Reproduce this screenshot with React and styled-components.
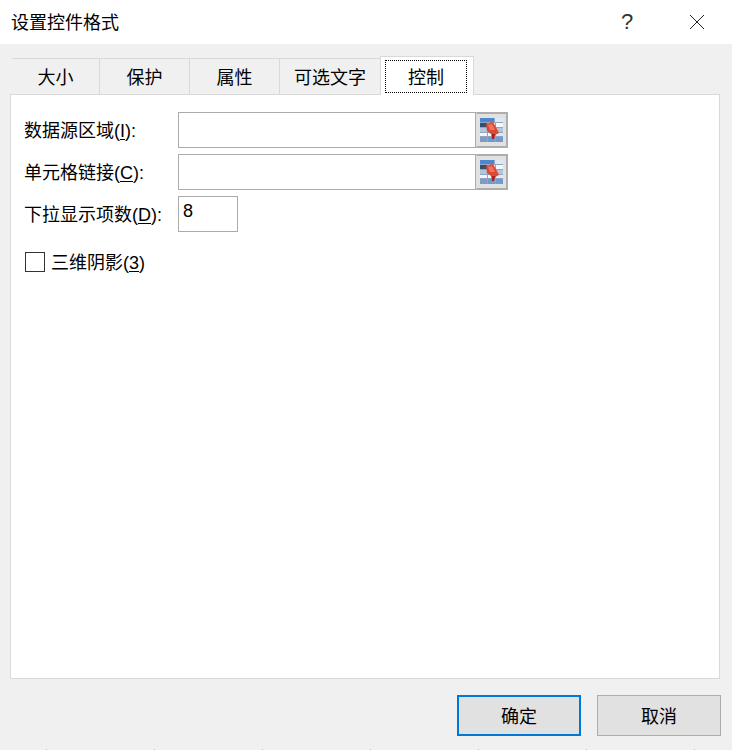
import React from "react";
import styled, { createGlobalStyle } from "styled-components";

const GlobalStyle = createGlobalStyle`
  html, body {
    margin: 0;
    padding: 0;
    background: #f0f0f0;
  }
  * {
    box-sizing: border-box;
  }
`;

const Dialog = styled.div`
  width: 732px;
  height: 750px;
  overflow: hidden;
  display: flex;
  flex-direction: column;
  background: #f0f0f0;
  color: #000;
  font-family: "Noto Sans CJK SC", "Liberation Sans", sans-serif;
  font-size: 18px;
`;

const TitleBar = styled.div`
  height: 44px;
  flex: none;
  display: flex;
  align-items: center;
  background: #fff;
  padding-left: 11px;
`;

const Title = styled.div`
  flex: 1;
  margin-top: -2px;
`;

const TitleButton = styled.div`
  width: 46px;
  height: 44px;
  display: flex;
  align-items: center;
  justify-content: center;
  font-family: "Liberation Sans", sans-serif;
  font-size: 22px;
  color: #333;
  margin-right: ${(p) => p.$end || 0}px;
`;

const Tabs = styled.div`
  height: 50px;
  flex: none;
  display: flex;
  align-items: flex-end;
  padding-left: 12px;
`;

const Tab = styled.div`
  width: ${(p) => p.$w}px;
  height: 36px;
  padding-bottom: 1px;
  display: flex;
  align-items: center;
  justify-content: center;
  border-top: 1px solid #d9d9d9;
  border-right: 1px solid #d9d9d9;
`;

const ActiveTab = styled.div`
  width: 94px;
  height: 39px;
  margin-left: -1px;
  margin-bottom: -1px;
  padding: 3px 6px 2px 4px;
  background: #fff;
  border: 1px solid #d9d9d9;
  border-bottom: none;
  position: relative;
  z-index: 1;
`;

const FocusBox = styled.div`
  height: 100%;
  padding-bottom: 1px;
  display: flex;
  align-items: center;
  justify-content: center;
  outline: 1px dotted #000;
  outline-offset: -1px;
`;

const Panel = styled.div`
  width: 710px;
  height: 585px;
  margin-left: 10px;
  flex: none;
  background: #fff;
  border: 1px solid #d9d9d9;
  padding: 17px 0 0 13px;
`;

const FieldRow = styled.div`
  display: flex;
  align-items: center;
  height: 36px;
  margin-bottom: 6px;
`;

const Label = styled.label`
  width: 154px;
  flex: none;
  padding-bottom: 3px;
  white-space: nowrap;
`;

const Key = styled.span`
  font-family: "Liberation Sans", sans-serif;
`;

const Hot = styled.span`
  text-decoration: underline;
  text-underline-offset: 2px;
`;

const RangeBox = styled.div`
  width: 298px;
  height: 36px;
  flex: none;
  background: #fff;
  border: 1px solid #ababab;
`;

const RangeButton = styled.div`
  width: 32px;
  height: 36px;
  flex: none;
  display: flex;
  align-items: center;
  justify-content: center;
  background: #e1e1e1;
  border: 2px solid #adadad;
  border-left: 1px solid #e1e1e1;
`;

const NumberBox = styled.div`
  width: 60px;
  height: 36px;
  flex: none;
  padding: 0 0 6px 4px;
  border: 1px solid #ababab;
  font-family: "Liberation Sans", sans-serif;
  display: flex;
  align-items: center;
`;

const CheckRow = styled.div`
  display: flex;
  align-items: center;
  height: 22px;
  margin-top: 19px;
  padding-left: 1px;
`;

const CheckBox = styled.div`
  width: 20px;
  height: 20px;
  flex: none;
  border: 1px solid #333;
  background: #fff;
  margin-right: 6px;
`;

const CheckText = styled.span`
  padding-bottom: 2px;
`;

const Footer = styled.div`
  flex: 1;
  display: flex;
  justify-content: flex-end;
  padding: 16px 11px 0 0;
  gap: 16px;
`;

const DialogButton = styled.div`
  width: 124px;
  height: 41px;
  padding-bottom: 2px;
  display: flex;
  align-items: center;
  justify-content: center;
  background: #e1e1e1;
  border: ${(p) => (p.$primary ? "2px solid #0078d7" : "1px solid #adadad")};
`;

// faint marks along the very bottom edge of the capture
const EdgeTicks = styled.div`
  height: 1px;
  flex: none;
  margin-left: 46px;
  background: repeating-linear-gradient(90deg, #bdbdbd 0 1px, transparent 1px 108px);
`;

const RangeIcon = () => (
  <svg width="23" height="24" viewBox="0 0 23 24" shapeRendering="crispEdges">
    <rect width="23" height="24" fill="#8fa6c2" />
    <rect x="0" y="0" width="14" height="4" fill="#4f86d0" />
    <rect x="15" y="0" width="8" height="4" fill="#dfe8f3" />
    <rect x="0" y="5" width="7" height="4" fill="#35506e" />
    <rect x="8" y="5" width="7" height="4" fill="#eef3f9" />
    <rect x="16" y="5" width="7" height="4" fill="#f4f7fb" />
    <rect x="0" y="10" width="7" height="4" fill="#b4c6dc" />
    <rect x="8" y="10" width="7" height="4" fill="#eef3f9" />
    <rect x="16" y="10" width="7" height="4" fill="#b4c6dc" />
    <rect x="0" y="15" width="7" height="3" fill="#f4f7fb" />
    <rect x="8" y="15" width="7" height="3" fill="#f4f7fb" />
    <rect x="16" y="15" width="7" height="3" fill="#dfe8f3" />
    <rect x="0" y="19" width="7" height="5" fill="#7f9cc0" />
    <rect x="8" y="19" width="7" height="5" fill="#6f9bd0" />
    <rect x="16" y="19" width="7" height="5" fill="#6f9bd0" />
    <path d="M6 6 L13 4 L17 11 L19 15 L15 17 L14 21 L12 21 L11 16 L7 13 Z" fill="#dc4a33" shapeRendering="auto" />
    <path d="M8 7 L12 6 L15 12 L10 12 Z" fill="#ee7561" shapeRendering="auto" />
    <path d="M12 16 L15 16 L14 21 L12 21 Z" fill="#a3231b" shapeRendering="auto" />
  </svg>
);

const CloseIcon = () => (
  <svg width="16" height="16" viewBox="0 0 16 16">
    <path d="M1 1 L15 15 M15 1 L1 15" stroke="#222" strokeWidth="1" fill="none" />
  </svg>
);

const RangeField = ({ children }) => (
  <FieldRow>
    <Label>{children}</Label>
    <RangeBox />
    <RangeButton>
      <RangeIcon />
    </RangeButton>
  </FieldRow>
);

export default function App() {
  return (
    <>
      <GlobalStyle />
      <Dialog>
        <TitleBar>
          <Title>设置控件格式</Title>
          <TitleButton $end={24}>?</TitleButton>
          <TitleButton $end={12}>
            <CloseIcon />
          </TitleButton>
        </TitleBar>
        <Tabs>
          <Tab $w={88}>大小</Tab>
          <Tab $w={90}>保护</Tab>
          <Tab $w={90}>属性</Tab>
          <Tab $w={101}>可选文字</Tab>
          <ActiveTab>
            <FocusBox>控制</FocusBox>
          </ActiveTab>
        </Tabs>
        <Panel>
          <RangeField>
            数据源区域<Key>(<Hot>I</Hot>):</Key>
          </RangeField>
          <RangeField>
            单元格链接<Key>(<Hot>C</Hot>):</Key>
          </RangeField>
          <FieldRow>
            <Label>
              下拉显示项数<Key>(<Hot>D</Hot>):</Key>
            </Label>
            <NumberBox>8</NumberBox>
          </FieldRow>
          <CheckRow>
            <CheckBox />
            <CheckText>
              三维阴影<Key>(<Hot>3</Hot>)</Key>
            </CheckText>
          </CheckRow>
        </Panel>
        <Footer>
          <DialogButton $primary>确定</DialogButton>
          <DialogButton>取消</DialogButton>
        </Footer>
        <EdgeTicks />
      </Dialog>
    </>
  );
}
